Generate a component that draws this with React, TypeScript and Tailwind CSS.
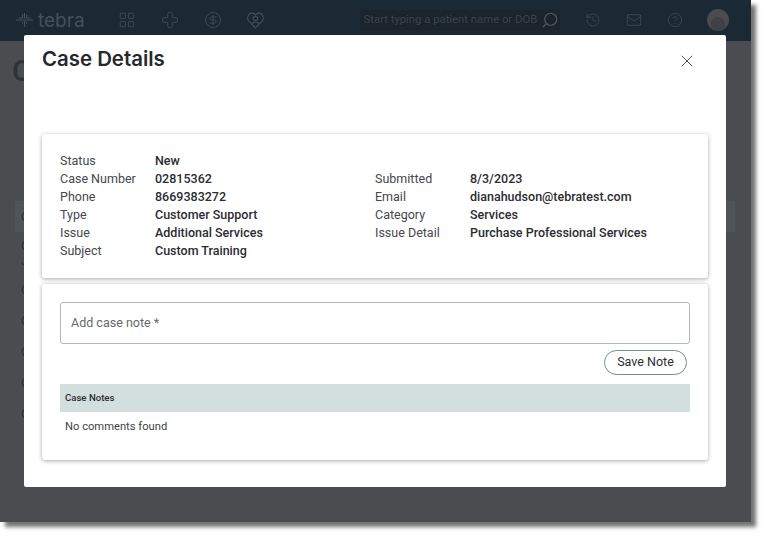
import { CircleDollarSign, Cross, History, LayoutGrid, Mail, CircleHelp, Search, X } from "lucide-react";

const FONT = "font-['Roboto','Noto_Sans',sans-serif]";

const leftRows = [
  ["Status", "New"],
  ["Case Number", "02815362"],
  ["Phone", "8669383272"],
  ["Type", "Customer Support"],
  ["Issue", "Additional Services"],
  ["Subject", "Custom Training"],
];

const rightRows = [
  ["", ""],
  ["Submitted", "8/3/2023"],
  ["Email", "dianahudson@tebratest.com"],
  ["Category", "Services"],
  ["Issue Detail", "Purchase Professional Services"],
];

// logo mark, dimmed by the backdrop
function TebraMark() {
  return (
    <svg width="17" height="16" viewBox="0 0 17 16" fill="none" stroke="#46505a" strokeWidth="1.2">
      <path d="M0 8h17M8.5 1v5.5M8.5 9v6" />
      <path d="M6.5 2.5v3.5H2.5M10.5 2.5v3.5h4" />
      <path d="M6.5 10v1.5M10.5 10v1.5" />
    </svg>
  );
}

function HeartUser() {
  return (
    <svg width="17" height="17" viewBox="0 0 17 17" fill="none" stroke="#424c55" strokeWidth="1.2">
      <path d="M8.5 16 1.8 9.2C-.4 6.8.8 1.6 4.6 1.2c1.7-.2 3 .6 3.9 1.7.9-1.1 2.2-1.9 3.9-1.7 3.8.4 5 5.6 2.8 8z" />
      <circle cx="8.5" cy="6.5" r="2.2" />
      <path d="M4.5 12c1-1.5 2.5-2 4-2s3 .5 4 2" />
    </svg>
  );
}

function Row({ label, value }: { label: string; value: string }) {
  return (
    <div className="flex h-[18px] items-center text-[12.5px]">
      <span className="w-[95px] shrink-0 text-[#44484c]">{label}</span>
      <span className="font-medium text-[#2a2d31]">{value}</span>
    </div>
  );
}

export default function App() {
  return (
    <div className={`h-[537px] w-[765px] overflow-hidden bg-white ${FONT}`}>
      <div className="relative flex h-[522px] w-[751px] flex-col bg-[#4b4c50] shadow-[5px_5px_4px_rgba(0,0,0,0.55)]">

        {/* Header behind the backdrop */}
        <header className="flex h-[41px] shrink-0 items-center bg-[#1a2933] pb-[1px] pl-[16px] text-[#424c55]">
          <TebraMark />
          <span className="ml-[5px] font-['Inter',sans-serif] text-[19px] leading-none text-[#46505a]">tebra</span>
          <LayoutGrid className="ml-[33px]" size={18} strokeWidth={1.2} />
          <Cross className="ml-[25px]" size={18} strokeWidth={1.2} />
          <CircleDollarSign className="ml-[25px]" size={18} strokeWidth={1.2} />
          <div className="ml-[25px]"><HeartUser /></div>
          <div className="ml-[96px] flex h-[20px] w-[200px] items-center bg-[#1b232c] pl-[4px] text-[11.3px] whitespace-nowrap text-[#39444c]">
            Start typing a patient name or DOB
            <Search className="ml-[4px] shrink-0 -scale-x-100 text-[#4d5860]" size={18} strokeWidth={1.6} />
          </div>
          <History className="ml-[25px]" size={16} strokeWidth={1.2} />
          <Mail className="ml-[25px]" size={16} strokeWidth={1.2} />
          <CircleHelp className="ml-[25px]" size={16} strokeWidth={1.2} />
          <div className="ml-[24px] flex h-[22px] w-[22px] items-end justify-center overflow-hidden rounded-full bg-[#4a4c52]">
            <div className="h-[14px] w-[14px] rounded-t-full bg-[#3f4147]" />
          </div>
        </header>

        {/* Page content behind the backdrop, the modal covers all but the first letters */}
        <div className="px-[12px] pt-[13px] text-[#2f3135]">
          <h1 className="h-[34px] text-[30px] leading-[34px] font-medium">C</h1>
          <div className="mt-[113px] ml-[3px] flex h-[31px] w-[720px] items-center bg-[#505357] pl-[6px] text-[13px]">C</div>
          <div className="ml-[9px] flex flex-col pt-[6px] text-[13px]">
            <span className="h-[15px] leading-[15px]">C</span>
            <span className="h-[29px] leading-[15px]">J</span>
            <span className="h-[31px] leading-[15px]">C</span>
            <span className="h-[31px] leading-[15px]">C</span>
            <span className="h-[31px] leading-[15px]">C</span>
            <span className="h-[31px] leading-[15px]">C</span>
            <span className="h-[31px] leading-[15px]">C</span>
          </div>
        </div>

        {/* Case details modal */}
        <div className="absolute top-[35px] left-[24px] flex h-[452px] w-[702px] flex-col rounded-[2px] bg-white px-[18px]">
          <div className="flex h-[99px] shrink-0 items-start justify-between">
            <h2 className="mt-[10px] font-['Inter',sans-serif] text-[20.4px] leading-[28px] font-semibold text-[#26282c]">Case Details</h2>
            <X className="mt-[16px] mr-[11px] text-[#333]" size={20} strokeWidth={1} />
          </div>

          <section className="grid h-[144px] shrink-0 grid-cols-2 rounded-[3px] bg-white px-[18px] py-[18px] shadow-[0_1px_4px_rgba(0,0,0,0.35)]">
            <div>
              {leftRows.map(([label, value]) => <Row key={label} label={label} value={value} />)}
            </div>
            <div>
              {rightRows.map(([label, value]) => <Row key={label} label={label} value={value} />)}
            </div>
          </section>

          <section className="mt-[6px] flex h-[176px] shrink-0 flex-col rounded-[3px] bg-white px-[18px] pt-[18px] shadow-[0_1px_4px_rgba(0,0,0,0.35)]">
            <div className="flex h-[42px] shrink-0 items-center rounded-[3px] border border-[#b4b6b8] pl-[10px] text-[12.5px] text-[#66696c]">
              Add case note *
            </div>
            <div className="mt-[6px] flex justify-end pr-[3px]">
              <button className="h-[25px] w-[83px] rounded-full border border-[#6f908c] text-[12.5px] text-[#2a2f36]">Save Note</button>
            </div>
            <div className="mt-[9px] flex h-[28px] shrink-0 items-center bg-[#d2dfdc] pl-[5px] text-[9.6px] font-medium text-[#2b2d30]">
              Case Notes
            </div>
            <div className="flex h-[30px] items-center pt-[1px] pl-[5px] text-[11.2px] text-[#3f4347]">No comments found</div>
          </section>
        </div>
      </div>
    </div>
  );
}
